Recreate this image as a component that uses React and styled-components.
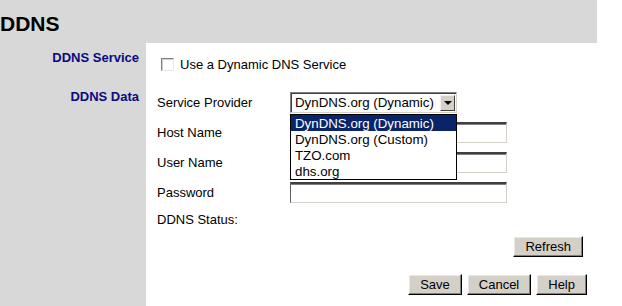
import React from "react";
import styled, { createGlobalStyle } from "styled-components";

const GlobalStyle = createGlobalStyle`
  html, body {
    margin: 0;
    padding: 0;
    background: #ffffff;
    font-family: "Liberation Sans", Arial, sans-serif;
    font-size: 13px;
    color: #000000;
  }
`;

const Page = styled.div`
  width: 622px;
  height: 306px;
  display: flex;
  flex-direction: column;
  overflow: hidden;
`;

const Header = styled.div`
  width: 597px;
  height: 43px;
  background: #d8d8d8;
  display: flex;
  align-items: center;
`;

const Title = styled.h1`
  margin: 0;
  font-size: 21px;
  font-weight: bold;
  line-height: 1;
  padding-top: 3px;
`;

const Main = styled.div`
  flex: 1;
  display: flex;
`;

const Sidebar = styled.div`
  width: 146px;
  background: #d8d8d8;
  display: flex;
  flex-direction: column;
  align-items: flex-end;
  padding: 7px 7px 0 0;
  box-sizing: border-box;
`;

const SideLabel = styled.div`
  font-weight: bold;
  color: #0a0a80;
  line-height: 15px;
  margin-top: ${(p) => p.$top || 0}px;
`;

const Content = styled.div`
  flex: 1;
  display: flex;
  flex-direction: column;
  padding: 11px 0 0 11px;
`;

const CheckRow = styled.label`
  display: flex;
  align-items: center;
  height: 20px;
  padding-left: 4px;
  gap: 6px;
`;

const CheckBox = styled.span`
  width: 13px;
  height: 13px;
  box-sizing: border-box;
  background: #ffffff;
  border-top: 1px solid #808080;
  border-left: 1px solid #808080;
  border-right: 1px solid #e8e8e8;
  border-bottom: 1px solid #e8e8e8;
  box-shadow: inset 1px 1px 0 #d4d0c8;
`;

const Form = styled.div`
  display: grid;
  grid-template-columns: 133px 217px;
  grid-auto-rows: 21px;
  row-gap: 9px;
  margin-top: 18px;
  align-items: center;
`;

const FieldLabel = styled.div`
  line-height: 21px;
`;

const Input = styled.div`
  height: 21px;
  width: ${(p) => p.$w || 217}px;
  box-sizing: border-box;
  background: #ffffff;
  border-top: 2px solid #404040;
  border-left: 1px solid #606060;
  border-right: 1px solid #d4d0c8;
  border-bottom: 1px solid #d4d0c8;
  box-shadow: inset 0 1px 0 #808080;
`;

const SelectWrap = styled.div`
  position: relative;
  width: 167px;
`;

const SelectBox = styled(Input)`
  display: flex;
  align-items: center;
  justify-content: space-between;
  padding: 0 1px 0 4px;
  font-size: 13.3px;
  border-top: 1px solid #808080;
  border-left: 1px solid #808080;
  box-shadow: inset 1px 1px 0 #404040;
`;

const ArrowButton = styled.span`
  width: 15px;
  height: 16px;
  box-sizing: border-box;
  background: #d4d0c8;
  border-top: 1px solid #f0f0f0;
  border-left: 1px solid #f0f0f0;
  border-right: 1px solid #404040;
  border-bottom: 1px solid #404040;
  display: flex;
  align-items: center;
  justify-content: center;
  margin-top: 1px;
`;

const Triangle = styled.span`
  width: 0;
  height: 0;
  border-left: 4px solid transparent;
  border-right: 4px solid transparent;
  border-top: 4px solid #000000;
`;

const DropList = styled.ul`
  position: absolute;
  top: 22px;
  left: 0;
  width: 167px;
  box-sizing: border-box;
  margin: 0;
  padding: 0;
  list-style: none;
  background: #ffffff;
  border: 1px solid #000000;
  z-index: 5;
`;

const Option = styled.li`
  height: 16px;
  line-height: 17px;
  padding-left: 4px;
  font-size: 13.3px;
  background: ${(p) => (p.$active ? "#0a246a" : "transparent")};
  color: ${(p) => (p.$active ? "#ffffff" : "#000000")};
`;

const StatusLabel = styled.div`
  line-height: 20px;
  margin-top: 7px;
`;

const ButtonRow = styled.div`
  display: flex;
  justify-content: flex-end;
  gap: 5px;
  padding-right: ${(p) => p.$right}px;
  margin-top: ${(p) => p.$top}px;
`;

const Button = styled.button`
  height: 21px;
  padding: 0 11px;
  font-family: "Liberation Sans", Arial, sans-serif;
  font-size: 13px;
  color: #000000;
  background: #d4d0c8;
  border-top: 1px solid #ffffff;
  border-left: 1px solid #ffffff;
  border-right: 1px solid #000000;
  border-bottom: 1px solid #000000;
  box-shadow: inset -1px -1px 0 #808080, inset 1px 1px 0 #e8e8e8;
  border-radius: 0;
`;

const providers = [
  "DynDNS.org (Dynamic)",
  "DynDNS.org (Custom)",
  "TZO.com",
  "dhs.org",
];

export default function App() {
  return (
    <Page>
      <GlobalStyle />
      <Header>
        <Title>DDNS</Title>
      </Header>
      <Main>
        <Sidebar>
          <SideLabel>DDNS Service</SideLabel>
          <SideLabel $top={24}>DDNS Data</SideLabel>
        </Sidebar>
        <Content>
          <CheckRow>
            <CheckBox />
            Use a Dynamic DNS Service
          </CheckRow>
          <Form>
            <FieldLabel>Service Provider</FieldLabel>
            <SelectWrap>
              <SelectBox $w={167}>
                <span>DynDNS.org (Dynamic)</span>
                <ArrowButton>
                  <Triangle />
                </ArrowButton>
              </SelectBox>
              <DropList>
                {providers.map((p, i) => (
                  <Option key={p} $active={i === 0}>
                    {p}
                  </Option>
                ))}
              </DropList>
            </SelectWrap>
            <FieldLabel>Host Name</FieldLabel>
            <Input />
            <FieldLabel>User Name</FieldLabel>
            <Input />
            <FieldLabel>Password</FieldLabel>
            <Input />
          </Form>
          <StatusLabel>DDNS Status:</StatusLabel>
          <ButtonRow $right={39} $top={6}>
            <Button>Refresh</Button>
          </ButtonRow>
          <ButtonRow $right={35} $top={17}>
            <Button>Save</Button>
            <Button>Cancel</Button>
            <Button>Help</Button>
          </ButtonRow>
        </Content>
      </Main>
    </Page>
  );
}
